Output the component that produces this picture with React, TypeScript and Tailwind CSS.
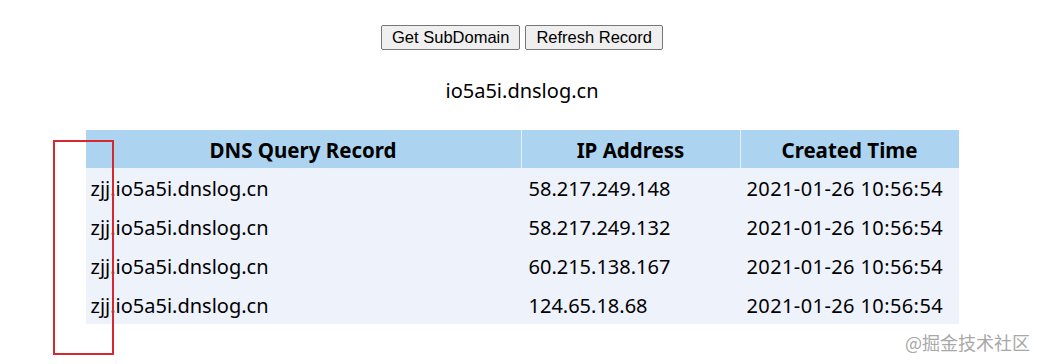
const records = [
  { domain: 'zjj.io5a5i.dnslog.cn', ip: '58.217.249.148', time: '2021-01-26 10:56:54' },
  { domain: 'zjj.io5a5i.dnslog.cn', ip: '58.217.249.132', time: '2021-01-26 10:56:54' },
  { domain: 'zjj.io5a5i.dnslog.cn', ip: '60.215.138.167', time: '2021-01-26 10:56:54' },
  { domain: 'zjj.io5a5i.dnslog.cn', ip: '124.65.18.68', time: '2021-01-26 10:56:54' },
];

export default function App() {
  return (
    <div className="relative w-[1044px] h-[364px] bg-white overflow-hidden text-black" style={{ fontFamily: '"Noto Sans", sans-serif' }}>
      <div className="flex justify-center gap-[5px] pt-[25px]">
        <button className="h-[25px] px-[10px] bg-[#efefef] border border-[#767676] rounded-[2px] text-[16.5px] leading-none font-['Liberation_Sans',sans-serif]">Get SubDomain</button>
        <button className="h-[25px] px-[10px] bg-[#efefef] border border-[#767676] rounded-[2px] text-[16.5px] leading-none font-['Liberation_Sans',sans-serif]">Refresh Record</button>
      </div>

      <div className="mt-[29px] text-center text-[20px] leading-[24px]">io5a5i.dnslog.cn</div>

      <div className="mx-auto mt-[27px] w-[873px] text-[20px]">
        <div className="grid grid-cols-[436px_219px_218px] h-[38px] bg-[#acd3ef] font-bold text-[20.5px]">
          <div className="flex items-center justify-center pt-[2px] border-r border-[#e6f2fb]">DNS Query Record</div>
          <div className="flex items-center justify-center pt-[2px] border-r border-[#e6f2fb]">IP Address</div>
          <div className="flex items-center justify-center pt-[2px]">Created Time</div>
        </div>
        <div className="bg-[#eef2fb]">
          {records.map((r, i) => (
            <div key={i} className="grid grid-cols-[436px_219px_218px] h-[39px] items-center pt-[3px]">
              <div className="pl-[5px]">{r.domain}</div>
              <div className="pl-[7px]">{r.ip}</div>
              <div className="pl-[6px] tracking-[0.4px]">{r.time}</div>
            </div>
          ))}
        </div>
      </div>

      {/* annotation box */}
      <div className="absolute left-[53px] top-[140px] w-[61px] h-[215px] border-2 border-[#d42a2f]" />

      <div className="absolute right-[14px] top-[329px] text-[18px] text-[#a8a8a8]" style={{ fontFamily: '"Noto Sans CJK SC", sans-serif' }}>@掘金技术社区</div>
    </div>
  );
}
